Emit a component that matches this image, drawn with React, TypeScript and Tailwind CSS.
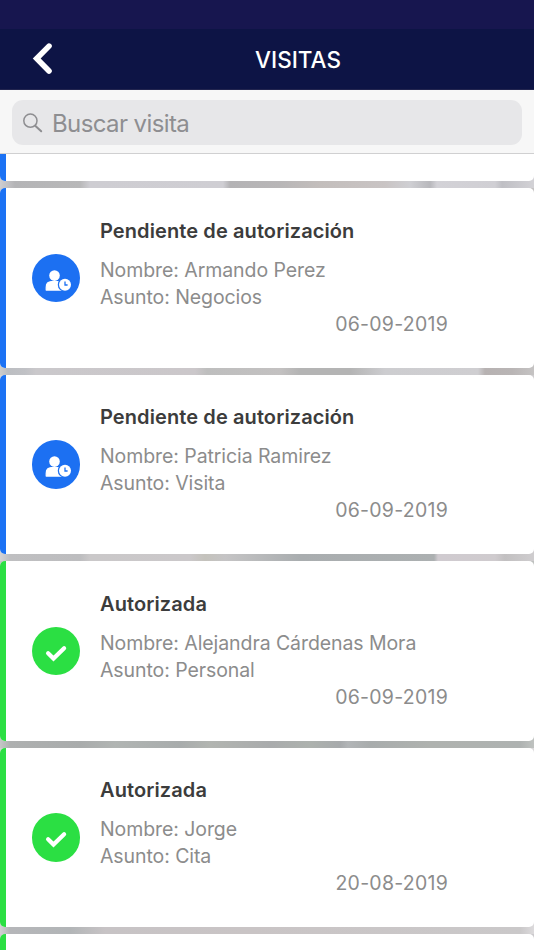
import React from 'react';

type Visit = {
  status: 'pending' | 'approved';
  name: string;
  subject: string;
  date: string;
  backdrop: string;
};

const visits: Visit[] = [
  {
    status: 'pending',
    name: 'Armando Perez',
    subject: 'Negocios',
    date: '06-09-2019',
    backdrop:
      'bg-[linear-gradient(90deg,#cccccc_0px,#bcbec2_8px,#c0c1c5_25px,#cac8cb_36px,#cbc7ca_195px,#bebebe_207px,#c3c1c1_280px,#b4b4b4_300px,#b4b4b4_350px,#cdcdd0_385px,#cfced1_478px,#b7b2b2_485px,#b9b5b5_512px,#c5c3c3_534px)]',
  },
  {
    status: 'pending',
    name: 'Patricia Ramirez',
    subject: 'Visita',
    date: '06-09-2019',
    backdrop:
      'bg-[linear-gradient(90deg,#d5d3d5_0px,#bfbfc1_10px,#bdbdbf_80px,#cac8c9_90px,#cbc8ca_190px,#c4c2bc_205px,#c5c4c5_225px,#a9adaf_300px,#acb0b1_434px,#d0cbd0_438px,#cfcbce_495px,#c2c0c1_505px,#cfcdcf_534px)]',
  },
  {
    status: 'approved',
    name: 'Alejandra Cárdenas Mora',
    subject: 'Personal',
    date: '06-09-2019',
    backdrop:
      'bg-[linear-gradient(90deg,#c5c7c6_0px,#aeb0b0_10px,#a9acac_80px,#b1b5b3_115px,#a8acac_180px,#b2b5b1_210px,#a9abac_270px,#adb2ae_310px,#a7aaac_340px,#b2b5b7_348px,#a8acac_370px,#afb2af_430px,#aeb2b1_520px,#bfc2c0_534px)]',
  },
  {
    status: 'approved',
    name: 'Jorge',
    subject: 'Cita',
    date: '20-08-2019',
    backdrop:
      'bg-[linear-gradient(90deg,#d2d0d3_0px,#b5b6b9_10px,#b2b5b7_70px,#c7c3c5_105px,#c9c4c5_250px,#cac8c9_520px,#dcdadc_534px)]',
  },
];

function PendingIcon() {
  return (
    <svg className="h-12 w-12" viewBox="0 0 48 48" fill="none">
      <circle cx="22.5" cy="21.6" r="5.3" fill="white" />
      <path
        d="M14.2 36.1V33.4C14.2 29.8 16.4 27.6 19.7 27.6H25.2C28.4 27.6 30.8 29.8 30.8 33.4V36.1Z"
        fill="white"
        stroke="white"
        strokeLinejoin="round"
        strokeWidth="1.2"
      />
      <circle cx="33" cy="30.7" r="7.2" fill="#1c70f2" />
      <circle cx="33" cy="30.7" r="6" fill="white" />
      <path d="M33 27.6V31H35.6" stroke="#1c70f2" strokeWidth="1.3" />
    </svg>
  );
}

function ApprovedIcon() {
  return (
    <svg className="h-12 w-12" viewBox="0 0 48 48" fill="none">
      <path
        d="M16.1 26.3L21.5 31.6L32.1 21.3"
        stroke="white"
        strokeWidth="4.2"
        strokeLinecap="round"
        strokeLinejoin="miter"
      />
    </svg>
  );
}

function VisitCard({ visit }: { visit: Visit }) {
  const pending = visit.status === 'pending';
  return (
    <div className={`h-[186.5px] shrink-0 pb-[7px] ${visit.backdrop}`}>
      <article className="flex h-full overflow-hidden rounded-[5px] bg-white">
        <div className={`w-1.5 shrink-0 ${pending ? 'bg-[#1c72f4]' : 'bg-[#2bdf43]'}`} />
        <div
          className={`mt-[65.5px] ml-[25.5px] flex h-[48.5px] w-[48.5px] shrink-0 items-center justify-center rounded-full ${
            pending ? 'bg-[#1c70f2]' : 'bg-[#2bdf43]'
          }`}
        >
          {pending ? <PendingIcon /> : <ApprovedIcon />}
        </div>
        <div className="ml-5 w-[348px] pt-[29.5px] text-[19.5px] leading-[27px] tracking-[-0.08px] text-[#8c8c8c]">
          <h2 className="mb-3 text-[20px] font-semibold tracking-[0.1px] text-[#3c3c3c]">
            {pending ? 'Pendiente de autorización' : 'Autorizada'}
          </h2>
          <p className="whitespace-nowrap">Nombre: {visit.name}</p>
          <p>Asunto: {visit.subject}</p>
          <p className="text-right tracking-[0.25px]">{visit.date}</p>
        </div>
      </article>
    </div>
  );
}

export default function App() {
  return (
    <main className="flex h-[950px] w-[534px] flex-col overflow-hidden bg-[#cccacd] font-['Inter','Liberation_Sans',sans-serif]">
      <div className="h-[29px] shrink-0 bg-[#17164f]" />
      <header className="flex h-[61px] shrink-0 items-center border-b border-[#22254f] bg-[#0d1445]">
        <button className="ml-8 h-8 w-6" aria-label="Atrás">
          <svg className="h-8 w-6" viewBox="0 0 24 32" fill="none">
            <path d="M17 3.1L4.7 15.5L17 28" stroke="white" strokeWidth="5.6" strokeLinecap="round" />
          </svg>
        </button>
        <h1 className="mr-[50px] flex-1 pt-px pl-14 text-center text-[22.5px] font-medium text-white">
          VISITAS
        </h1>
      </header>
      <div className="h-16 shrink-0 border-b border-[#d0d0d1] bg-[#f7f7f7] px-3 pt-2.5">
        <label className="flex h-[45px] items-center rounded-[11px] bg-[#e7e7e9] pl-[11px]">
          <svg className="h-5 w-5 shrink-0" viewBox="0 0 20 20" fill="none" stroke="#8e8e91">
            <circle cx="7.4" cy="7.7" r="6.6" strokeWidth="1.5" />
            <path d="M12.2 12.7L18.2 18.3" strokeWidth="2" strokeLinecap="round" />
          </svg>
          <input
            className="ml-[9px] flex-1 bg-transparent pt-0.5 text-[24px] tracking-[-0.6px] text-[#8e8e91] outline-none placeholder:text-[#8e8e91]"
            placeholder="Buscar visita"
          />
        </label>
      </div>
      <div className="h-[34px] shrink-0 bg-[linear-gradient(90deg,#cfced1_0px,#b4b4b6_15px,#b8b8b9_80px,#cecdd2_90px,#cfced3_223px,#b4b3b5_230px,#b8b6b7_280px,#c3bebc_320px,#c9c4c4_385px,#cfcfd3_410px,#b8b8bc_430px,#d3d2d7_437px,#d0cfd4_495px,#bfbfc4_502px,#d3d2d6_534px)] pb-[7px]">
        <div className="flex h-full overflow-hidden rounded-b-[5px] bg-white">
          <div className="w-1.5 bg-[#1c72f4]" />
        </div>
      </div>
      {visits.map((visit) => (
        <VisitCard key={visit.name} visit={visit} />
      ))}
      <div className="flex h-[180px] shrink-0 overflow-hidden rounded-t-[5px] bg-white">
        <div className="w-1.5 bg-[#2bdf43]" />
      </div>
    </main>
  );
}
